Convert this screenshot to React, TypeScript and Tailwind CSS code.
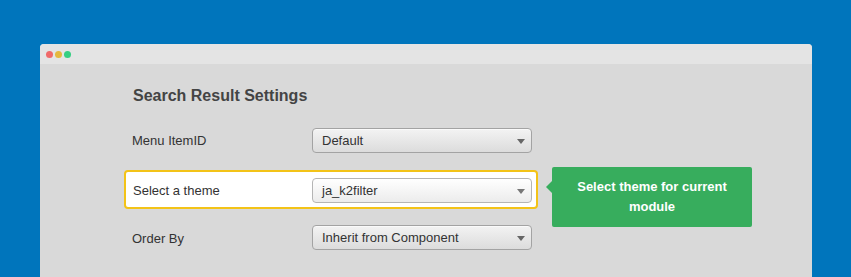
import React from "react";

function Select({ value }: { value: string }) {
  return (
    <div className="relative ml-auto flex h-[25px] w-[220px] items-center rounded-[4px] border border-[#a3a3a3] bg-gradient-to-b from-[#f3f3f3] to-[#dcdcdc] pl-[9px] pt-[1px] text-[13px] text-[#333] shadow-[inset_0_1px_0_rgba(255,255,255,0.6)]">
      <span>{value}</span>
      <span className="absolute right-[6px] top-[10px] h-0 w-0 border-l-[4px] border-r-[4px] border-t-[5px] border-l-transparent border-r-transparent border-t-[#666]" />
    </div>
  );
}

export default function App() {
  return (
    <div
      className="h-[277px] w-[851px] overflow-hidden bg-[#0075bc] pl-[40px] pr-[39px] pt-[44px]"
      style={{ fontFamily: '"Liberation Sans", Arial, sans-serif' }}
    >
      <div className="h-[260px] overflow-hidden rounded-t-[4px] bg-[#d9d9d9]">
        <div className="flex h-[20px] items-center gap-[2px] bg-[#e4e4e4] pl-[6px]">
          <span className="h-[7px] w-[7px] rounded-full bg-[#ef6a6a]" />
          <span className="h-[7px] w-[7px] rounded-full bg-[#e5b83e]" />
          <span className="h-[7px] w-[7px] rounded-full bg-[#35cf82]" />
        </div>
        <div className="pl-[84px] pt-[23px]">
          <div className="pl-[9px] text-[16px] font-bold leading-[18px] text-[#444]">
            Search Result Settings
          </div>
          <div className="mt-[15px] flex w-[414px] items-center border-2 border-transparent py-[5px] pl-[6px] pr-[4px] pt-[6px] text-[13px] text-[#333]">
            <span>Menu ItemID</span>
            <Select value="Default" />
          </div>
          <div className="relative mt-[10px] flex w-[414px] items-center rounded-[4px] border-2 border-[#f3c318] bg-white pb-[4px] pl-[7px] pr-[4px] pt-[6px] text-[13px] text-[#333]">
            <span className="pt-[1px]">Select a theme</span>
            <div className="relative ml-auto flex h-[25px] w-[220px] items-center rounded-[4px] border border-[#b5b5b5] bg-gradient-to-b from-[#ffffff] to-[#ececec] pl-[9px] pt-[1px] text-[13px] text-[#333]">
              <span>ja_k2filter</span>
              <span className="absolute right-[6px] top-[10px] h-0 w-0 border-l-[4px] border-r-[4px] border-t-[5px] border-l-transparent border-r-transparent border-t-[#777]" />
            </div>
            <div className="absolute left-[426px] top-[-5px] h-[60px] w-[200px] rounded-[2px] bg-[#37ad5d] pt-[10px] text-center text-[13px] font-bold leading-[20px] text-white">
              <span className="absolute left-[-6px] top-[14px] h-0 w-0 border-b-[6px] border-r-[6px] border-t-[6px] border-b-transparent border-r-[#37ad5d] border-t-transparent" />
              Select theme for current
              <br />
              module
            </div>
          </div>
          <div className="mt-[9px] flex w-[414px] items-center border-2 border-transparent pb-[5px] pl-[6px] pr-[4px] pt-[5px] text-[13px] text-[#333]">
            <span className="pt-[2px]">Order By</span>
            <Select value="Inherit from Component" />
          </div>
        </div>
      </div>
    </div>
  );
}
